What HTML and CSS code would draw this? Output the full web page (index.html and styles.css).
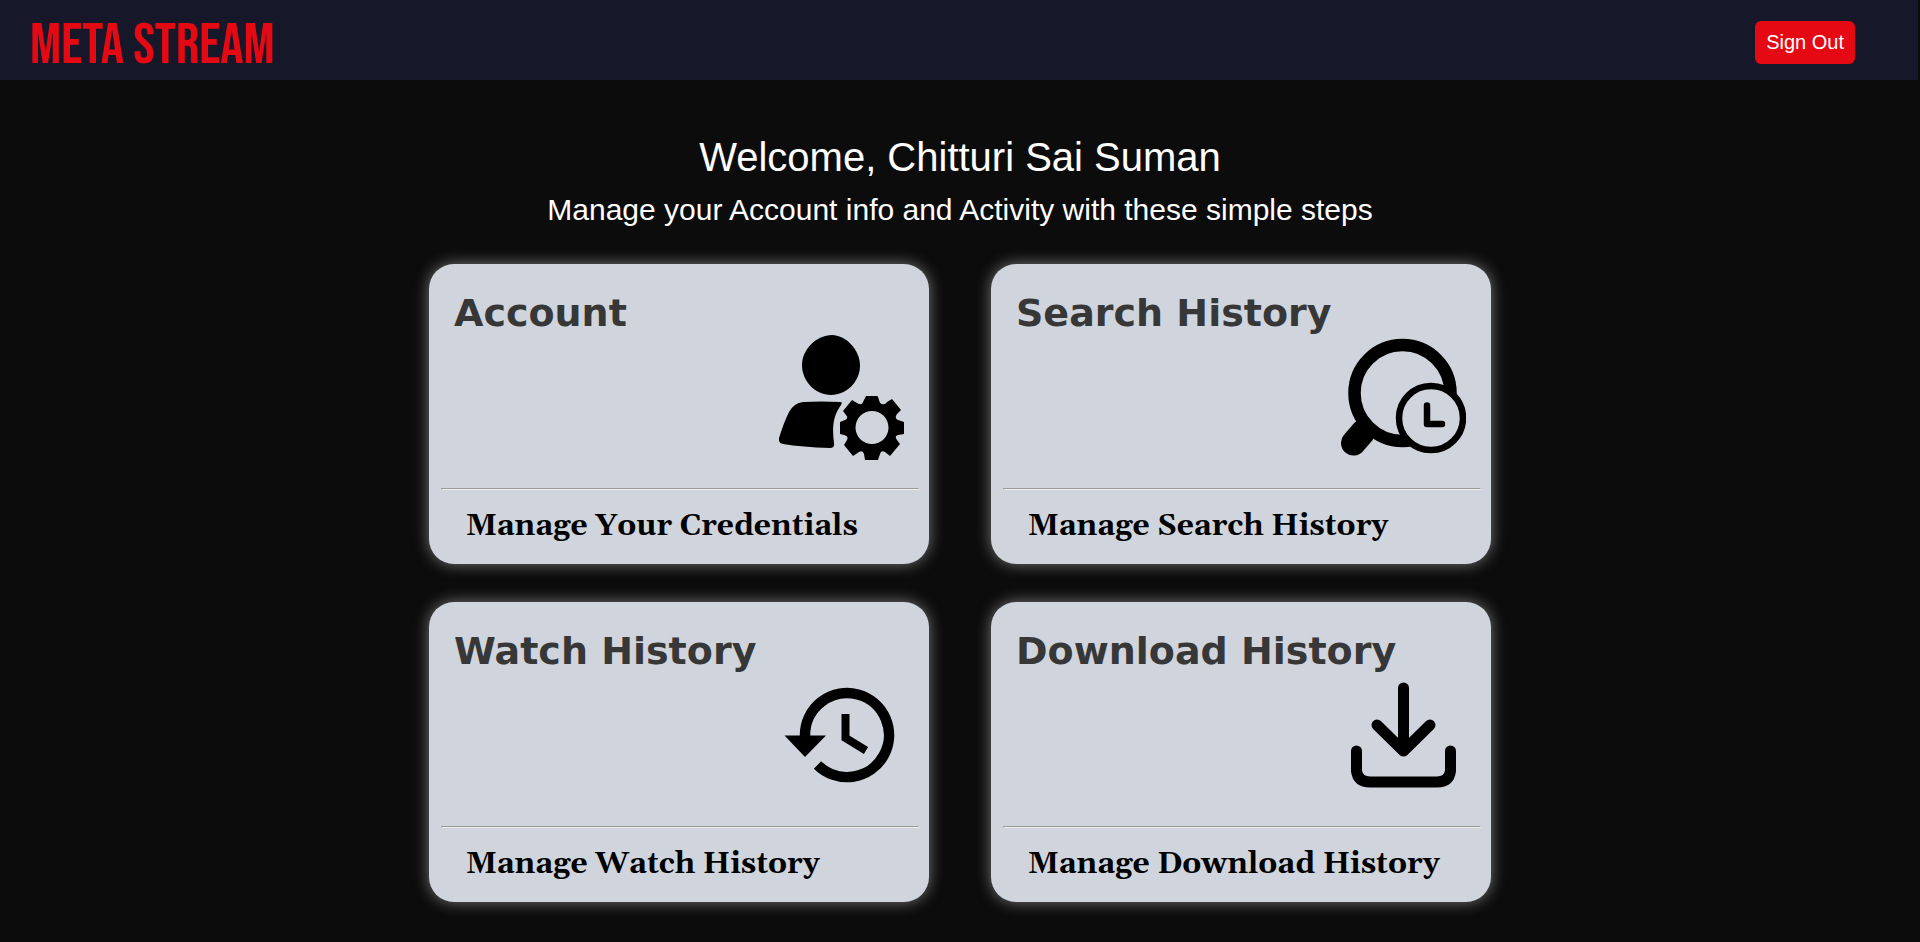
FILE: index.html
```html
<!DOCTYPE html>
<html lang="en">
<head>
<meta charset="utf-8">
<title>Meta Stream</title>
<link rel="stylesheet" href="styles.css">
</head>
<body>
<header class="topbar">
  <a class="logo" href="#">META STREAM</a>
  <button class="signout" type="button">Sign Out</button>
</header>
<main class="page">
  <h1 class="welcome">Welcome, Chitturi Sai Suman</h1>
  <p class="intro">Manage your Account info and Activity with these simple steps</p>
  <div class="cards">
    <section class="card">
      <h2 class="card-title">Account</h2>
      <svg class="card-icon" viewBox="0 0 125 125" aria-hidden="true">
        <path d="M53 0C66 0 81 14 81 31C81 46 68 60 52 60C36 60 23 46 23 30C23 14 38 0 53 0Z"/>
        <path d="M24 67Q43 66 61 67Q64 67 62 70C54 81 53 92 55 108Q56 113 51 113Q23 112 4 109Q-1 108 0 103Q5 87 10 77Q15 68 24 67Z"/>
        <path fill-rule="evenodd" d="M87 61H98Q99 61 100 65Q101 69 103 69Q106 70 108 67L113 64L122 75L118 79Q115 83 119 85L125 87V99L119 100Q115 101 118 105L121 109L111 121L106 117Q102 115 101 119L99 125H86L85 119Q84 115 80 117L74 121L65 110L68 105Q70 101 65 100L61 99V87L66 85Q70 83 67 80L64 76L73 65L78 68Q83 71 84 67ZM93 76A16 16 0 1 0 93 109A16 16 0 1 0 93 76Z"/>
      </svg>
      <hr class="rule">
      <a class="card-link" href="#">Manage Your Credentials</a>
    </section>
    <section class="card">
      <h2 class="card-title">Search History</h2>
      <svg class="card-icon" viewBox="0 0 125 125" aria-hidden="true">
        <circle class="line" cx="61.500" cy="58" r="48" stroke-width="12.500"/>
        <path class="line" d="M12.500 108L22 97" stroke-width="25" stroke-linecap="round"/>
        <circle class="line hollow" cx="90" cy="83" r="32" stroke-width="6.500"/>
        <path class="line" d="M86 70.500V89H101" stroke-width="6.500" stroke-linecap="round" stroke-linejoin="round"/>
      </svg>
      <hr class="rule">
      <a class="card-link" href="#">Manage Search History</a>
    </section>
    <section class="card">
      <h2 class="card-title">Watch History</h2>
      <svg class="card-icon" viewBox="0 0 125 125" aria-hidden="true">
        <path class="line" d="M26 64V62A42 42 0 1 1 38.500 92" stroke-width="10.500"/>
        <path d="M5.500 62.500H47L26 84Z"/>
        <path class="line" d="M66.500 41V65L87 77.500" stroke-width="8"/>
      </svg>
      <hr class="rule">
      <a class="card-link" href="#">Manage Watch History</a>
    </section>
    <section class="card">
      <h2 class="card-title">Download History</h2>
      <svg class="card-icon" viewBox="0 0 125 125" aria-hidden="true">
        <path class="line" d="M62.500 15V78M36 52L62.500 78L89 52M15.500 78V98Q17 109 29 109H96Q108 109 109.500 98V78" stroke-width="11" stroke-linecap="round" stroke-linejoin="round"/>
      </svg>
      <hr class="rule">
      <a class="card-link" href="#">Manage Download History</a>
    </section>
  </div>
</main>
</body>
</html>
```
FILE: styles.css
```css
* {
  box-sizing: border-box;
}

body {
  margin: 0;
  background: #0c0c0c;
  color: #fff;
  font-family: "Liberation Sans", Arial, sans-serif;
}

.topbar {
  display: flex;
  align-items: center;
  justify-content: space-between;
  height: 80px;
  margin-right: 2px;
  padding: 4px 63px 0 30px;
  background: #161728;
}

.logo {
  padding-top: 6px;
  color: #e50914;
  font-family: "Bebas Neue", "Liberation Sans Narrow", sans-serif;
  font-size: 58px;
  text-decoration: none;
}

.signout {
  height: 43px;
  padding: 0 11px;
  border: 0;
  border-radius: 6px;
  background: #e50914;
  color: #fff;
  font: 20px "Liberation Sans", Arial, sans-serif;
}

.page {
  padding: 54px 0 40px;
  text-align: center;
}

.welcome {
  margin: 0;
  font-size: 40px;
  font-weight: normal;
  line-height: 46px;
}

.intro {
  margin: 12px 0 37px;
  font-size: 30px;
  line-height: 35px;
}

.cards {
  display: grid;
  grid-template-columns: 500px 500px;
  gap: 38px 62px;
  justify-content: center;
}

.card {
  display: flex;
  flex-direction: column;
  height: 300px;
  border-radius: 25px;
  background: #d0d5dd;
  box-shadow: 0 0 15px #777;
  color: #000;
  text-align: left;
}

.card-title {
  margin: 27px 25px 0;
  color: #373737;
  font: bold 38px/44px Verdana, "DejaVu Sans", sans-serif;
}

.card-icon {
  align-self: flex-end;
  width: 125px;
  height: 125px;
  margin-right: 25px;
}

.line {
  fill: none;
  stroke: #000;
}

.hollow {
  fill: #d0d5dd;
}

.rule {
  align-self: stretch;
  margin: 28px 10px 0 12px;
  border: 1px solid;
  border-color: #9a9a9a #eee #eee #9a9a9a;
}

.card-link {
  margin: 19px 37px 0;
  color: #000;
  font: bold 30px/35px Gelasio, Georgia, "Liberation Serif", serif;
  text-decoration: none;
}
```
